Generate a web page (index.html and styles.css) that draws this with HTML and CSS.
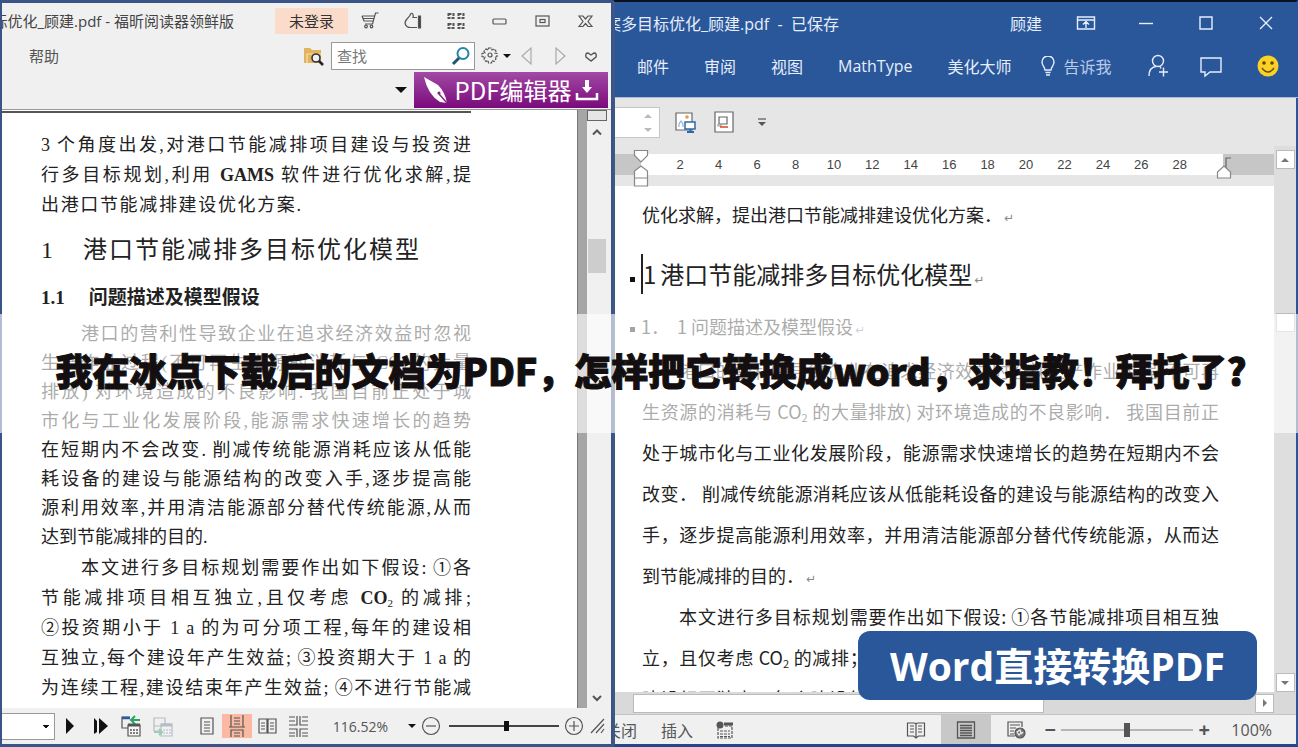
FILE: index.html
```html
<!DOCTYPE html>
<html lang="zh-CN">
<head>
<meta charset="utf-8">
<title>PDF 转 Word</title>
<link rel="stylesheet" href="styles.css">
</head>
<body>
<main class="desktop">
  <section class="reader">
    <header class="reader-head">
      <div class="reader-title">
        <div class="clip-title reader-name"><span>标优化_顾建.pdf - 福昕阅读器领鲜版</span></div>
        <button class="login">未登录</button>
        <button class="tool" aria-label="购物车"><svg width="20" height="20" viewBox="0 0 20 20"><path d="M18.500 2h-3l-3 11H5M2 5h12.500M2 5l2 5h9.500M3 7.500h11"/><circle cx="6" cy="15.500" r="1.300"/><circle cx="11.500" cy="15.500" r="1.300"/></svg></button>
        <button class="tool" aria-label="手型"><svg width="20" height="20" viewBox="0 0 20 20"><path d="M14 6.500h-4c1-3-1-5-2-4C7 5 7 5 4 8c-4 4-1 8.500 3 8.500h7"/><path class="solid" d="M15.500 5h2v12h-2z"/></svg></button>
        <button class="tool" aria-label="皮肤"><svg width="20" height="20" viewBox="0 0 20 20"><path d="M2.500 3h5v4h-5zM12.500 3h5v4h-5zM2.500 13h5v4h-5zM12.500 13h5v4h-5z" stroke-dasharray="3 1" stroke-width="2"/></svg></button>
        <button class="tool" aria-label="最小化"><svg width="20" height="20" viewBox="0 0 20 20"><rect x="4" y="8" width="13" height="5" rx="1"/></svg></button>
        <button class="tool" aria-label="最大化"><svg width="20" height="20" viewBox="0 0 20 20"><rect x="4" y="5" width="13" height="10"/><rect x="8" y="8.500" width="5" height="3"/></svg></button>
        <button class="tool" aria-label="关闭"><svg width="20" height="20" viewBox="0 0 20 20"><path d="M4 5h4l2.500 3L13 5h4l-4 5.500 4 5h-4l-2.500-3-2.500 3H4l4-5z"/></svg></button>
      </div>
      <div class="reader-menu">
        <button class="menu-item">帮助</button>
        <span class="fill"></span>
        <button class="bare" aria-label="在文件夹中查找"><svg width="22" height="20" viewBox="0 0 22 20"><path d="M1 2h6l2 2h9v13H1z" fill="#e2b45f" stroke="none"/><path d="M4 17V8h14" stroke="#f7e0b0"/><circle cx="13" cy="12" r="4" fill="#f0f0f0" stroke="#333" stroke-width="1.600"/><path d="M16 15l4 4" stroke="#222" stroke-width="2.500"/></svg></button>
        <label class="find"><input type="text" placeholder="查找" aria-label="查找"><svg width="20" height="20" viewBox="0 0 20 20"><circle cx="12" cy="7.500" r="5.500" fill="#fff" stroke="#2484ad" stroke-width="2"/><path d="M8 12l-6 6" stroke="#225572" stroke-width="3"/></svg></label>
        <button class="bare gear" aria-label="设置"><svg width="20" height="20" viewBox="0 0 20 20"><path d="M8.500 2h3l.5 2 2-1 2 2-1 2 2 .5v3l-2 .5 1 2-2 2.500-2-1-.5 2.500h-3L8 14.500l-2 1L4 13l1-2-3-.5v-3L5 7 4 5l2-2 2 1z" stroke-dasharray="3 1"/><circle cx="10" cy="9" r="2"/></svg><i class="caret"></i></button>
        <button class="bare" aria-label="上一个"><svg width="33" height="20" viewBox="0 0 33 20"><path d="M20 2v16L11 10z" stroke="#aaa"/></svg></button>
        <button class="bare" aria-label="下一个"><svg width="33" height="20" viewBox="0 0 33 20"><path d="M12 2v16L21 10z" stroke="#aaa"/></svg></button>
        <button class="bare" aria-label="收起"><svg width="28" height="20" viewBox="0 0 28 20"><path d="M14 15l-5-4q-1-4 2-4l3 2 3-2q3 0 2 4z" stroke-width="1.400"/></svg></button>
      </div>
      <div class="reader-promo">
        <i class="caret big"></i>
        <button class="promo"><svg width="28" height="30" viewBox="0 0 28 30"><path d="M1 2l14 8q7 7 9 18L17 27Q5 20 1 2z" fill="#fff" stroke="none"/><path d="M16 19l8 9" stroke="#8b2189" stroke-width="1.500"/><circle cx="16" cy="18" r="1.600" fill="#8b2189" stroke="none"/></svg><span>PDF编辑器</span><svg width="24" height="24" viewBox="0 0 24 24"><path d="M12 2v8" stroke="#fff" stroke-width="4"/><path d="M7 9h10l-5 6z" fill="#fff" stroke="none"/><path d="M2 15v6h20v-6" stroke="#fff" stroke-width="2.500"/></svg></button>
      </div>
    </header>
    <div class="reader-body">
      <article class="paper">
        <hr class="paper-rule">
        <p class="para lead"><span class="line">3 个角度出发,对港口节能减排项目建设与投资进</span><span class="line">行多目标规划,利用 <b>GAMS</b> 软件进行优化求解,提</span><span class="line end">出港口节能减排建设优化方案.</span></p>
        <h2 class="paper-h1"><span>1</span><span class="line">港口节能减排多目标优化模型</span></h2>
        <h3 class="paper-h2"><span>1.1</span><span>问题描述及模型假设</span></h3>
        <p class="para main"><span class="line indent">港口的营利性导致企业在追求经济效益时忽视</span><span class="line">生产作业过程(不可再生资源的消耗与 CO<sub>2</sub> 的大量</span><span class="line">排放) 对环境造成的不良影响. 我国目前正处于城</span><span class="line">市化与工业化发展阶段,能源需求快速增长的趋势</span><span class="line">在短期内不会改变. 削减传统能源消耗应该从低能</span><span class="line">耗设备的建设与能源结构的改变入手,逐步提高能</span><span class="line">源利用效率,并用清洁能源部分替代传统能源,从而</span><span class="line end">达到节能减排的目的.</span></p>
        <p class="para"><span class="line indent">本文进行多目标规划需要作出如下假设: ①各</span><span class="line">节能减排项目相互独立,且仅考虑 <b>CO</b><sub>2</sub> 的减排;</span><span class="line">②投资期小于 1 a 的为可分项工程,每年的建设相</span><span class="line">互独立,每个建设年产生效益; ③投资期大于 1 a 的</span><span class="line">为连续工程,建设结束年产生效益; ④不进行节能减</span><span class="line">排项目日常减排; 能源消耗量和 CO 排放量不发</span></p>
      </article>
      <div class="gutter"></div>
      <div class="reader-scroll"><i class="split"></i><svg width="12" height="12" viewBox="0 0 12 12"><path d="M2 8.500l4-4 4 4" stroke-width="2"/></svg><i class="thumb"></i><span class="fill"></span><svg width="12" height="12" viewBox="0 0 12 12"><path d="M2 4l4 4 4-4" stroke-width="2"/></svg></div>
    </div>
    <footer class="reader-status">
      <select class="page-select" aria-label="页码"><option></option></select>
      <button class="bare" aria-label="下一页"><svg width="30" height="24" viewBox="0 0 30 24"><path d="M11 4l8 8-8 8z" fill="#111" stroke="none"/></svg></button>
      <button class="bare" aria-label="最后一页"><svg width="30" height="24" viewBox="0 0 30 24"><path d="M9 4l3 3v11l-3 2zM14 4l9 8-9 8z" fill="#111" stroke="none"/></svg></button>
      <button class="bare" aria-label="上一视图"><svg width="32" height="24" viewBox="0 0 32 24"><path d="M13 14H7V3h8"/><path d="M7 4h8" stroke="#255aa5" stroke-width="2.500"/><path d="M25 6h-8m3-4l-4 4 4 4" stroke="#27a567" stroke-width="2"/><path d="M13 11h12v11H13z" fill="#f6f6f6"/><path d="M13 11h12" stroke-width="3"/><path d="M15 16h8M15 19h8" stroke-dasharray="2 1" stroke-width="1.500"/></svg></button>
      <button class="bare" aria-label="下一视图"><svg width="32" height="24" viewBox="0 0 32 24"><g stroke="#b5bdc6"><path d="M7 4h11v8H7zM7 5v12h5"/><path d="M14 10h11v12H14z" fill="#f1f1f1"/><path d="M14 11h11" stroke-width="3"/><path d="M16 16h8M16 19h8" stroke-dasharray="2 1"/></g><path d="M7 18h8m-3-3l3 3-3 3" stroke="#9bcdb2" stroke-width="2"/></svg></button>
      <button class="bare view-one" aria-label="单页"><svg width="30" height="24" viewBox="0 0 30 24"><path d="M9 4h12v16H9zM12 8h6M12 11h6M12 14h6M12 17h6"/></svg></button>
      <button class="bare active" aria-label="连续"><svg width="30" height="24" viewBox="0 0 30 24"><path d="M9 1v12h12V1M7 13h16M9 23v-7h12v7M12 4h6M12 7h6M12 10h6M12 19h6M12 22h6"/></svg></button>
      <button class="bare" aria-label="对开"><svg width="31" height="24" viewBox="0 0 31 24"><path d="M7 5h8v14H7zM16 5h8v14h-8zM9 9h4M9 12h4M9 15h4M18 9h4M18 12h4M18 15h4"/></svg></button>
      <button class="bare" aria-label="连续对开"><svg width="31" height="24" viewBox="0 0 31 24"><path d="M14 2v9H6M17 2v9h8M14 23v-8H6M17 23v-8h8M6 3h6M6 7h6M19 3h6M19 7h6M6 19h6M19 19h6M6 22h6M19 22h6"/></svg></button>
      <span class="fill"></span>
      <span class="zoom-text">116.52%</span>
      <i class="caret"></i>
      <button class="bare" aria-label="缩小"><svg width="20" height="20" viewBox="0 0 20 20"><circle cx="10" cy="10" r="8.500"/><path d="M5 10h10"/></svg></button>
      <input class="reader-zoom" type="range" min="0" max="100" value="52" aria-label="缩放">
      <button class="bare" aria-label="放大"><svg width="20" height="20" viewBox="0 0 20 20"><circle cx="10" cy="10" r="8.500"/><path d="M5 10h10M10 5v10"/></svg></button>
      <svg width="18" height="20" viewBox="0 0 18 20"><path d="M2 17L15 3M7 17l8-9M12 17l3-4"/></svg>
    </footer>
  </section>

  <section class="word">
    <header class="word-head">
      <div class="word-title">
        <div class="clip-title word-name"><span>案多目标优化_顾建.pdf&nbsp; -&nbsp; 已保存</span></div>
        <span class="fill"></span>
        <span class="user">顾建</span>
        <button class="win" aria-label="功能区"><svg width="20" height="20" viewBox="0 0 20 20"><path d="M1.500 4h17v12h-17zM1.500 7h17M10 15V9M7 11.500l3-3 3 3"/></svg></button>
        <button class="win" aria-label="最小化"><svg width="20" height="20" viewBox="0 0 20 20"><path d="M3 10.500h14"/></svg></button>
        <button class="win" aria-label="最大化"><svg width="20" height="20" viewBox="0 0 20 20"><path d="M4 4h12v12H4z"/></svg></button>
        <button class="win" aria-label="关闭"><svg width="20" height="20" viewBox="0 0 20 20"><path d="M4 4l12 12M16 4L4 16"/></svg></button>
      </div>
      <nav class="ribbon">
        <button>邮件</button><button>审阅</button><button>视图</button><button>MathType</button><button>美化大师</button>
        <span class="fill"></span>
        <button class="tell"><svg width="16" height="20" viewBox="0 0 16 20"><path d="M5 14c0-3-3-4-3-8a6 6 0 0112 0c0 4-3 5-3 8zM5.500 16.500h5M6 19h4"/></svg><span>告诉我</span></button>
        <span class="fill"></span>
        <button class="face" aria-label="共享"><svg width="24" height="24" viewBox="0 0 24 24"><circle cx="12" cy="7" r="5.500"/><path d="M3 22c0-6 3-9 7-9.500M15 14.500l-1-2M13 18h9M17.500 13.500v9"/></svg></button>
        <button class="face" aria-label="批注"><svg width="24" height="24" viewBox="0 0 24 24"><path d="M2 4h20v14H11l-5 4v-4H2z"/></svg></button>
        <button class="face" aria-label="反馈"><svg width="24" height="24" viewBox="0 0 24 24"><circle cx="12" cy="12" r="10.500" fill="#fbd126" stroke="none"/><circle cx="8" cy="9" r="1.800" fill="#5b4510" stroke="none"/><circle cx="16" cy="9" r="1.800" fill="#5b4510" stroke="none"/><path d="M6 14q6 8 12 0" stroke="#6b4a10"/></svg></button>
      </nav>
    </header>
    <div class="quick">
      <div class="spin"><i class="up"></i><i class="down"></i></div>
      <button class="bare" aria-label="图片"><svg width="22" height="22" viewBox="0 0 22 22"><path d="M2 2h16v17H2z" fill="#fff" stroke="#666"/><circle cx="13" cy="6" r="1.800" fill="#e69a4a" stroke="none"/><path d="M5 16v-3l2-3 2 3v3" stroke="#8fb4da"/><path d="M11 11h10v7H11z" fill="#fff" stroke="#2c69a8" stroke-width="1.500"/><path d="M13 21h7M16.500 18v3" stroke="#2c69a8" stroke-width="2"/></svg></button>
      <button class="bare" aria-label="文本框"><svg width="22" height="22" viewBox="0 0 22 22"><path d="M2 1h18v20H2z" fill="#fff" stroke="#666"/><path d="M6 6h8v7H6z" stroke="#666"/><path d="M8 13v2H5v-2" stroke="#999"/><path d="M7 16h8" stroke="#d24726" stroke-width="1.500"/></svg></button>
      <button class="bare" aria-label="更多"><svg width="12" height="12" viewBox="0 0 12 12"><path d="M2 3h8"/><path d="M2 6h8l-4 4z" fill="#555" stroke="none"/></svg></button>
    </div>
    <div class="word-body">
      <div class="word-view">
        <div class="ruler">
          <div class="ruler-off"><svg class="mark-left" width="16" height="38" viewBox="0 0 16 38"><path d="M1.500 1.500h13v5L8 13 1.500 6.500zM1.500 37v-15L8 17l6.500 5v15zM1.500 29h13" fill="#fff" stroke="#888"/></svg></div>
          <div class="ruler-on"><span>2</span><span>4</span><span>6</span><span>8</span><span>10</span><span>12</span><span>14</span><span>16</span><span>18</span><span>20</span><span>22</span><span>24</span><span>26</span><span>28</span></div>
          <div class="ruler-off ruler-end"><svg class="mark-right" width="18" height="24" viewBox="0 0 18 24"><path d="M10 12V2h5" stroke="#666"/><path d="M1.500 22v-6L8 10l6.500 6v6z" fill="#fff" stroke="#888"/></svg></div>
        </div>
        <article class="sheet">
          <p class="wline end">优化求解，提出港口节能减排建设优化方案．<i class="ret">↵</i></p>
          <h2 class="sheet-h1"><span>1</span><span>港口节能减排多目标优化模型<i class="ret">↵</i></span></h2>
          <h3 class="sheet-h2"><span>1．&nbsp; 1 问题描述及模型假设<i class="ret">↵</i></span></h3>
          <p class="wline indent">港口的营利性导致企业在追求经济效益时忽视生产作业过程(不可再</p>
          <p class="wline">生资源的消耗与 CO<sub>2</sub> 的大量排放) 对环境造成的不良影响． 我国目前正</p>
          <p class="wline">处于城市化与工业化发展阶段，能源需求快速增长的趋势在短期内不会</p>
          <p class="wline">改变． 削减传统能源消耗应该从低能耗设备的建设与能源结构的改变入</p>
          <p class="wline">手，逐步提高能源利用效率，并用清洁能源部分替代传统能源，从而达</p>
          <p class="wline end">到节能减排的目的．<i class="ret">↵</i></p>
          <p class="wline indent">本文进行多目标规划需要作出如下假设: ①各节能减排项目相互独</p>
          <p class="wline">立，且仅考虑 CO<sub>2</sub> 的减排；②投资期小于 1 a 的为可分项工程，每年的</p>
          <p class="wline">建设相互独立，每个建设年产生效益；③投资期大于 1 a 的为连续工程</p>
        </article>
      </div>
      <div class="vscroll"><i class="sbtn"><b class="up"></b></i><span class="track-a"></span><i class="sbtn"></i><span class="track-b"></span><i class="sbtn"><b class="down"></b></i></div>
    </div>
    <div class="hscroll"><i class="hthumb"></i><i class="sbtn"><b class="right"></b></i></div>
    <footer class="word-status">
      <span class="clip-title closed"><span>关闭</span></span>
      <span>插入</span>
      <svg width="18" height="18" viewBox="0 0 18 18"><path d="M2 7v10h14V5H8M4 10h10M4 13h10M4 15.500h10" stroke-dasharray="3 1"/><path d="M8 3h9" stroke-width="3"/><circle cx="4" cy="4" r="3.500" fill="#555" stroke="none"/></svg>
      <span class="fill"></span>
      <button class="bare mode" aria-label="阅读视图"><svg width="20" height="18" viewBox="0 0 20 18"><path d="M1.500 2h6q2 0 2.500 1 .5-1 2.500-1h6v13h-6l-2.500 2-2.500-2h-6zM10 3v13M4 5h4M4 8h4M4 11h4M12 5h4M12 8h4M12 11h4"/></svg></button>
      <button class="bare mode on" aria-label="页面视图"><svg width="20" height="18" viewBox="0 0 20 18"><path d="M1.500 1h17v16h-17zM4 4.500h12M4 7h12M4 9.500h12M4 12h12M4 14.500h12" stroke-width="1.300"/></svg></button>
      <button class="bare mode" aria-label="Web 视图"><svg width="20" height="18" viewBox="0 0 20 18"><path d="M9 15H2V1h14v5M4 4h10M4 7h6M4 10h4M4 13h4"/><circle cx="14" cy="12" r="5" fill="#777"/><path d="M11 11l3-2 1 3-2 2zM15 13l2-2" stroke="#eee"/></svg></button>
      <button class="bare sign" aria-label="缩小">−</button>
      <input class="word-zoom" type="range" min="0" max="100" value="50" aria-label="缩放">
      <button class="bare sign" aria-label="放大">+</button>
      <span class="percent">100%</span>
    </footer>
    <div class="badge">Word直接转换PDF</div>
  </section>
  <div class="banner"><h1>我在冰点下载后的文档为PDF，怎样把它转换成word，求指教！拜托了?</h1></div>
</main>
</body>
</html>
```
FILE: styles.css
```css
* { box-sizing: border-box; }
body { margin: 0; font-family: "Open Sans", "Noto Sans CJK SC", sans-serif; }
button { border: 0; padding: 0; margin: 0; background: none; font: inherit; color: inherit; display: flex; align-items: center; justify-content: center; white-space: nowrap; }
svg { display: block; flex: none; fill: none; stroke: #555; stroke-width: 1.2; }
i, b { font-style: normal; }
h1, h2, h3, p { margin: 0; font-weight: 400; }
.solid { fill: #444; }
.fill { flex: 1; }
.clip-title { display: flex; justify-content: flex-end; overflow: hidden; white-space: nowrap; flex: none; }
.caret { border: 4px solid transparent; border-top-color: #111; border-bottom: 0; flex: none; }
.caret.big { border-width: 6px 6px 0; }

.desktop { position: relative; display: grid; grid-template-columns: 613fr 685fr; height: 100vh; min-height: 600px; overflow: hidden; }

/* PDF reader */
.reader { display: flex; flex-direction: column; min-width: 0; min-height: 0; background: #f0f0f0; border: solid #3b5488; border-width: 3px 2px 3px 2px; color: #555; }
.reader-head { border-bottom: 1px solid #999; }
.reader-title { display: flex; align-items: center; height: 35px; padding-right: 5px; }
.reader-name { width: 232px; font-size: 15px; color: #444; }
.login { width: 73px; height: 26px; margin-left: auto; background: #fbdccb; font-size: 15px; color: #333; }
.tool { width: 43px; height: 30px; }
.reader-menu { display: flex; align-items: center; height: 33px; padding: 2px 6px 0 0; }
.menu-item { font-size: 15px; margin-left: 27px; }
.find { display: flex; align-items: center; width: 144px; height: 28px; margin-left: 6px; padding: 0 3px 0 5px; background: #fff; border: 1px solid #999; }
.find input { flex: 1; min-width: 0; border: 0; padding: 0; background: none; font: inherit; font-size: 15px; outline: 0; }
.find input::placeholder { color: #777; }
.gear { margin-left: 5px; gap: 3px; }
.reader-promo { display: flex; align-items: center; justify-content: flex-end; gap: 7px; height: 38px; padding: 1px 3px 1px 0; }
.promo { width: 194px; height: 36px; gap: 4px; background: linear-gradient(#a24aa5, #7a0a7c); color: #fff; font-family: "Noto Sans CJK SC", sans-serif; font-size: 24px; line-height: 30px; }

.reader-body { flex: 1; display: flex; min-height: 0; overflow: hidden; }
.paper { flex: 1; min-width: 0; background: #fff; padding: 0 106px 0 39px; color: #222; font-family: "Liberation Serif", "Noto Sans CJK SC", serif; font-size: 18px; overflow: hidden; }
.paper-rule { height: 2px; margin: 1px 0 0 -39px; border: 0; background: #555; }
.line { display: block; text-align: justify; text-align-last: justify; white-space: nowrap; }
.line.end { text-align-last: left; }
.line.indent { padding-left: 40px; }
.para { line-height: 30px; }
.para sub, .wline sub { font-size: 11px; line-height: 0; vertical-align: -3px; }
.para.lead { padding-top: 17px; }
.para.lead .end { width: 260px; text-align-last: justify; }
.para.main { line-height: 29px; padding-bottom: 1px; }
.paper-h1 { display: flex; gap: 30px; width: 378px; padding-top: 11px; font-size: 24px; line-height: 38px; }
.paper-h1 .line { flex: 1; }
.paper-h2 { display: flex; gap: 24px; padding: 14px 0 7px; font-size: 19px; line-height: 30px; font-weight: 700; }
.gutter { width: 10px; background: #a5a5a5; border-left: 1px solid #777; }
.reader-scroll { width: 24px; display: flex; flex-direction: column; align-items: center; padding: 0 4px 4px 0; background: #f0f0f0; }
.split { width: 20px; height: 11px; border: 1px solid #666; background: #e5e5e5; margin-bottom: 5px; }
.thumb { width: 18px; height: 34px; margin-top: 101px; background: #cdcdcd; }

.reader-status { display: flex; align-items: center; height: 36px; padding-right: 4px; }
.page-select { width: 53px; height: 27px; background: #fff; border: 1px solid #999; border-left: 0; appearance: none; background-image: linear-gradient(45deg, transparent 50%, #111 50%), linear-gradient(-45deg, transparent 50%, #111 50%); background-position: 40px 11px, 44px 11px; background-size: 4px 4px; background-repeat: no-repeat; }
.view-one { margin-left: 13px; }
.active { background: #fbb8a2; }
.zoom-text { font-size: 14px; margin-right: 20px; }
.reader-status .caret { margin-right: 5px; }
input[type="range"] { appearance: none; background: none; margin: 0; height: 20px; }
input.reader-zoom { width: 110px; margin: 0 5px 0 8px; }
.reader-zoom::-webkit-slider-runnable-track { height: 2px; background: #444; }
.reader-zoom::-webkit-slider-thumb { appearance: none; width: 5px; height: 10px; margin-top: -4px; background: #111; }
.reader-status > svg { margin-left: 5px; }

/* Word */
.word { position: relative; display: flex; flex-direction: column; min-width: 0; min-height: 0; background: #e6e6e6; border-top: 2px solid #0a0f22; border-bottom: 3px solid #24468a; border-right: 2px solid #2a579a; border-left: 2px solid #3e5a84; }
.word-head { background: #2a579a; color: #e6eefb; font-size: 16px; border-bottom: 1px solid #a9bddb; margin-right: -2px; padding-right: 2px; }
.word-head svg { stroke: #e6eefb; stroke-width: 1.4; }
.word-title { display: flex; align-items: center; height: 41px; }
.word-name { width: 224px; }
.user { margin-right: 14px; }
.word-title .win { width: 60px; height: 40px; }
.ribbon { display: flex; align-items: center; height: 54px; padding: 0 2px 8px 22px; gap: 35px; }
.ribbon .fill { margin-left: -35px; }
.tell { gap: 7px; color: #b9cbe8; margin-left: -6px; }
.ribbon .face { width: 24px; }
.ribbon .face + .face { margin-left: -6px; }
.ribbon .face:last-child { margin-right: 16px; margin-left: -2px; }
.quick { display: flex; align-items: center; gap: 17px; height: 48px; }
.quick .bare:last-child { margin-left: 4px; }
.spin { display: flex; flex-direction: column; justify-content: space-between; align-items: flex-end; width: 45px; height: 31px; margin-right: -3px; padding: 6px 7px 5px; background: #fff; border: 1px solid #c6c6c6; border-left: 0; }
.up, .down, .right { display: block; border: 4px solid transparent; }
.up { border-bottom-color: #777; border-top: 0; }
.down { border-top-color: #777; border-bottom: 0; }
.right { border-left-color: #777; border-right: 0; }
.spin .up, .spin .down { opacity: .5; }
.word-body { flex: 1; display: flex; min-height: 0; }
.word-view { flex: 1; min-width: 0; display: flex; flex-direction: column; }
.ruler { display: flex; height: 40px; padding: 8px 0 11px; }
.ruler-off { position: relative; width: 26px; background: #c6c6c6; }
.ruler-end { width: 51px; }
.mark-left { position: absolute; right: -8px; top: -5px; }
.mark-right { position: absolute; left: -7px; top: 2px; }
.ruler-on { flex: 1; display: grid; grid-template-columns: repeat(14, 1fr); align-items: center; padding: 0 24px 0 20px; background: #fff; color: #444; font: 13px "Liberation Sans", sans-serif; text-align: center; }
.sheet { flex: 1; min-height: 0; overflow: hidden; background: #fff; padding: 8px 55px 0 27px; color: #222; font-size: 18px; font-family: "Noto Sans CJK SC", sans-serif; }
.wline { line-height: 41px; white-space: nowrap; text-align: justify; text-align-last: justify; }
.wline.end { text-align-last: left; }
.wline.indent { padding-left: 37px; }
.ret { font: 12px "DejaVu Sans", sans-serif; color: #888; margin-left: 2px; }
.sheet-h1, .sheet-h2 { display: flex; align-items: center; margin-left: -12px; }
.sheet-h1::before, .sheet-h2::before { content: ""; width: 5px; height: 5px; background: #111; margin: 10px 6px 0 0; }
.sheet-h1 { font-size: 24px; line-height: 40px; margin-top: 19px; }
.sheet-h1 span:first-of-type { border-left: 2px solid #222; margin-right: 4px; line-height: 40px; }
.sheet-h2 { font-size: 18px; line-height: 40px; margin: 12px 0 4px -12px; }
.sheet-h2::before { margin-top: 6px; }
.vscroll { width: 22px; display: flex; flex-direction: column; align-items: center; padding: 4px 1px 0; background: #dedede; }
.sbtn { display: flex; align-items: center; justify-content: center; flex: none; width: 19px; height: 19px; background: #fff; border: 1px solid #bbb; }
.track-a { flex: 144; }
.track-b { flex: 340; }
.hscroll { display: flex; justify-content: space-between; align-items: center; height: 23px; padding: 1px 22px 1px 18px; background: #d9d9d9; border-bottom: 1px solid #c4c4c4; }
.hthumb { width: 411px; height: 19px; background: #fff; border: 1px solid #bbb; }
.word-status { display: flex; align-items: center; height: 29px; background: #f0f0f0; color: #555; font-size: 16px; padding-right: 24px; }
.closed { width: 22px; margin-right: 24px; }
.word-status > svg { margin-left: 23px; }
.mode { width: 50px; height: 29px; }
.mode.on { background: #c8c8c8; }
.sign { width: 18px; font-size: 20px; font-weight: 700; line-height: 20px; }
input.word-zoom { width: 132px; margin: 0 2px; }
.word-zoom::-webkit-slider-runnable-track { height: 2px; background: #b5b5b5; }
.word-zoom::-webkit-slider-thumb { appearance: none; width: 6px; height: 14px; margin-top: -6px; background: #555; }
.percent { margin-left: 18px; }
.badge { position: absolute; right: 39px; bottom: 44px; padding: 0 32px; border-radius: 12px; background: #2a579a; color: #fff; font: 700 39px/69px "Open Sans", "Noto Sans CJK SC", sans-serif; white-space: nowrap; }

/* Headline strip across both windows */
.banner { position: absolute; left: 0; right: 0; top: 314px; height: 119px; display: flex; align-items: center; justify-content: center; padding: 0 0 8px 4px; background: rgba(255, 255, 255, .62); }
.banner h1 { font: 900 37px/54px "Noto Sans CJK SC", sans-serif; color: #130f10; -webkit-text-stroke: 1px #130f10; white-space: nowrap; }
```
